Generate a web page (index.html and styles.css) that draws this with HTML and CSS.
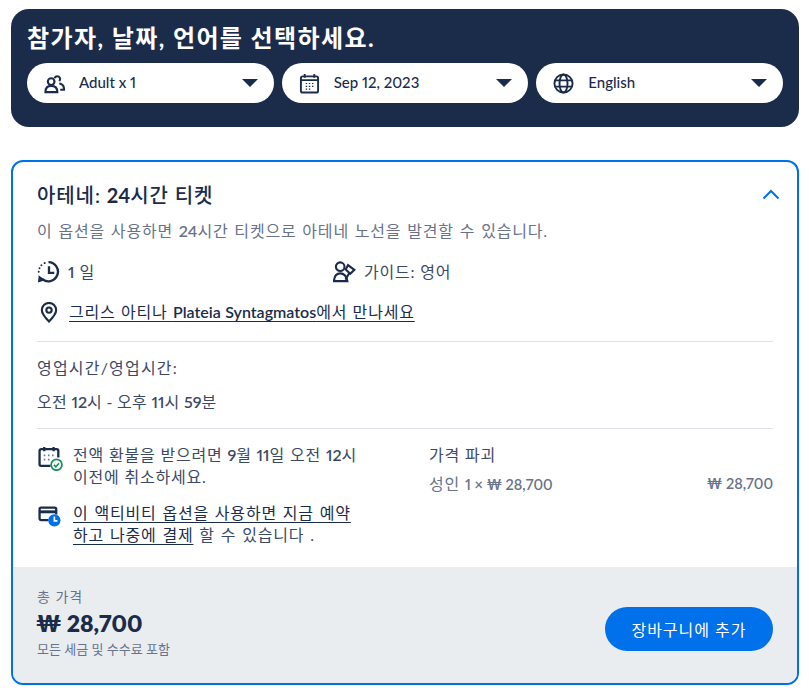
FILE: index.html
```html
<!DOCTYPE html>
<html lang="ko">
<head>
<meta charset="utf-8"/>
<title>옵션 선택</title>
<link rel="stylesheet" href="styles.css">
</head>
<body>

<div class="picker">
  <h2>참가자, 날짜, 언어를 선택하세요.</h2>
  <div class="picker-row">
    <div class="pill">
      <svg class="pill-icon" viewBox="0 0 22 22" fill="none" stroke="#1b2c4b" stroke-width="2.200"><path d="M11 5.500a3 3 0 1 1 5 3"/><path d="M16 11c3 .3 5 2.500 5 6.500h-4"/><circle cx="7.500" cy="9" r="3.500"/><path d="M1.500 20c0-4.500 2.500-6.500 6-6.500s6.500 2 6.500 6.500z"/></svg>
      <span class="pill-text">Adult x 1</span>
      <span class="caret"></span>
    </div>
    <div class="pill">
      <svg class="pill-icon" viewBox="0 0 22 22" fill="none" stroke="#1b2c4b" stroke-width="2"><rect x="2" y="3.500" width="18" height="17" rx="2"/><path d="M6 1v4M16 1v4M2 7.500h18"/><path d="M7 11h1.500M10.300 11h1.500M13.600 11h1.500M7 14h1.500M10.300 14h1.500M13.600 14h1.500M7 17h1.500M10.300 17h1.500" stroke-width="1.300"/></svg>
      <span class="pill-text">Sep 12, 2023</span>
      <span class="caret"></span>
    </div>
    <div class="pill">
      <svg class="pill-icon" viewBox="0 0 22 22" fill="none" stroke="#1b2c4b" stroke-width="2"><circle cx="11" cy="11" r="9.500"/><ellipse cx="11" cy="11" rx="4.200" ry="9.500"/><path d="M2 7.700h18M2 14.300h18"/></svg>
      <span class="pill-text">English</span>
      <span class="caret"></span>
    </div>
  </div>
</div>

<div class="option-card">
  <div class="option-body">
    <div class="option-head">
      <h3>아테네: <span class="lat">24</span>시간 티켓</h3>
      <svg class="chevron" viewBox="0 0 18 11" fill="none" stroke="#0070eb" stroke-width="2"><path d="M1.500 9.500L9 2l7.500 7.500"/></svg>
    </div>
    <p class="option-desc">이 옵션을 사용하면 <span class="lat">24</span>시간 티켓으로 아테네 노선을 발견할 수 있습니다.</p>

    <div class="facts">
      <div class="fact">
        <svg class="fact-icon" viewBox="0 0 24 24" fill="none" stroke="#1b2c4b" stroke-width="2.400"><path d="M12 2.200A10 10 0 1 1 5 19.500"/><path d="M12.500 6.500v7h5.500"/><path d="M1 23.500l.8-7.500 6.700 5z" fill="#1b2c4b" stroke="none"/><path d="M8 3.200v.1M4.600 5.400v.1M2.600 8.600v.1M1.800 12.200v.1" stroke-linecap="round" stroke-width="2"/></svg>
        <span><span class="lat">1</span> 일</span>
      </div>
      <div class="fact">
        <svg class="fact-icon" viewBox="0 0 24 24" fill="none" stroke="#1b2c4b" stroke-width="2.200"><circle cx="7.500" cy="7" r="4.500"/><path d="M1 22c.3-5.500 2.500-8 6.500-8s6.500 2.500 7.500 8z"/><path d="M15.700 5.300l6.600 5-4.300 4-4.700-4.300z" fill="#fff"/><path d="M17 13.500l-4 7"/></svg>
        <span>가이드: 영어</span>
      </div>
    </div>

    <div class="meet">
      <svg class="meet-icon" viewBox="0 0 18 22" fill="none" stroke="#1b2c4b" stroke-width="2.200"><path d="M9 20.500C5 16.500 1.500 12.800 1.500 8.500a7.500 7.500 0 0 1 15 0c0 4.300-3.500 8-7.500 12z"/><circle cx="9" cy="8.500" r="2.800"/></svg>
      <a class="link" href="#">그리스 아티나 <span class="lat">Plateia Syntagmatos</span>에서 만나세요</a>
    </div>

    <div class="hours">
      <p class="hours-label">영업시간/영업시간:</p>
      <p class="hours-time">오전 <span class="lat">12</span>시 - 오후 <span class="lat">11</span>시 <span class="lat">59</span>분</p>
    </div>

    <div class="policy">
      <div class="policy-left">
        <div class="policy-item">
          <svg class="policy-icon" viewBox="0 0 24 24" fill="none" stroke="#1b2c4b" stroke-width="2.200"><path d="M12 19H3a1.500 1.500 0 0 1-1.500-1.500V4.500A1.500 1.500 0 0 1 3 3h15a1.500 1.500 0 0 1 1.500 1.500V11"/><path d="M6 1v4M15 1v4"/><path d="M5.500 9h1.500M9.500 9h1.500M13.500 9h1.500M5.500 13h1.500M9.500 13h1.500" stroke="#68728a" stroke-width="1.600"/><circle cx="17.800" cy="18" r="5.200" fill="#fff" stroke="#17905c" stroke-width="1.700"/><path d="M15.300 18.100l1.800 1.800 3.100-3.400" stroke="#17905c" stroke-width="1.600"/></svg>
          <p>전액 환불을 받으려면 <span class="lat">9</span>월 <span class="lat">11</span>일 오전 <span class="lat">12</span>시<br>이전에 취소하세요.</p>
        </div>
        <div class="policy-item policy-pay">
          <svg class="policy-icon" viewBox="0 0 24 24" fill="none" stroke="#1b2c4b" stroke-width="2.200"><path d="M10 15.500H3A1.500 1.500 0 0 1 1.500 14V5A1.500 1.500 0 0 1 3 3.500h13A1.500 1.500 0 0 1 17.500 5v5"/><path d="M1.500 7.500h16" stroke-width="2.800"/><circle cx="15.700" cy="15.700" r="5.900" fill="#0070eb" stroke="none"/><path d="M15.700 12v4.200h3" stroke="#fff" stroke-width="1.600"/></svg>
          <p><a class="link" href="#">이 액티비티 옵션을 사용하면 지금 예약<br>하고 나중에 결제</a> 할 수 있습니다 .</p>
        </div>
      </div>
      <div class="breakdown">
        <div class="breakdown-title">가격 파괴</div>
        <div class="breakdown-row">
          <span>성인 <span class="lat">1 × ₩ 28,700</span></span>
          <span class="lat">₩ 28,700</span>
        </div>
      </div>
    </div>
  </div>

  <div class="option-foot">
    <div>
      <div class="total-label">총 가격</div>
      <div class="total-price">₩ 28,700</div>
      <div class="total-note">모든 세금 및 수수료 포함</div>
    </div>
    <button class="add-btn">장바구니에 추가</button>
  </div>
</div>

</body>
</html>
```

FILE: styles.css
```css
body {
  font-family: "Lato", "Noto Sans CJK KR", sans-serif;
  font-variant-numeric: proportional-nums;
  margin: 0px;
  padding: 9px 10px 0 11px;
  color: #1b2c4b;
  background: #fff;
}

h2, h3, p {
  margin: 0;
}

a.link {
  color: #1b2c4b;
  text-decoration: underline;
  text-underline-offset: 3px;
}

/* latin runs and digits sit tighter and heavier than the hangul */
.lat {
  letter-spacing: 0;
  font-weight: 600;
}

/* top picker */
.picker {
  background: #1b2c4b;
  border-radius: 18px;
  padding: 14px 16px 24px;
  height: 118px;
  box-sizing: border-box;
}

.picker h2 {
  color: #fff;
  font-size: 24px;
  font-weight: 700;
  line-height: 30px;
  letter-spacing: 1.4px;
  margin-bottom: 10px;
}

.picker-row {
  display: flex;
  gap: 8px;
}

.pill {
  flex: 1;
  height: 40px;
  background: #fff;
  border-radius: 20px;
  display: flex;
  align-items: center;
  padding: 0 16px 0 17px;
  font-size: 15px;
  font-weight: 500;
}

.pill-icon {
  width: 21px;
  height: 21px;
  margin-right: 14px;
}

.pill-text {
  flex: 1;
  padding-bottom: 2px;
}

.caret {
  width: 0;
  height: 0;
  border-left: 8.500px solid transparent;
  border-right: 8.500px solid transparent;
  border-top: 8px solid #1b2c4b;
}

/* option card */
.option-card {
  margin-top: 33px;
  border: 2px solid #0070eb;
  border-radius: 12px;
  overflow: hidden;
}

.option-body {
  padding: 20px 24px 0;
  letter-spacing: 0.8px;
  font-size: 16px;
}

.option-head {
  display: flex;
  justify-content: space-between;
  align-items: center;
  height: 24px;
}

.option-head h3 {
  font-size: 20px;
  font-weight: 500;
  letter-spacing: 0.9px;
}

.option-head h3 .lat {
  font-weight: 700;
}

.chevron {
  width: 18px;
  height: 11px;
  margin-right: -7px;
}

.option-desc {
  margin-top: 14px;
  line-height: 22px;
  word-spacing: 1px;
  color: #68728a;
}

.facts {
  display: grid;
  grid-template-columns: 296px 1fr;
  margin-top: 17px;
}

.fact {
  display: flex;
  align-items: center;
  gap: 8px;
  height: 24px;
  color: #3c4964;
}

.fact-icon {
  width: 23px;
  height: 23px;
}

.meet {
  display: flex;
  align-items: center;
  gap: 11px;
  margin-top: 17px;
  padding-bottom: 17px;
  line-height: 24px;
  word-spacing: 0.5px;
  border-bottom: 1px solid #dfe2e6;
}

.meet-icon {
  width: 18px;
  height: 21px;
  margin-left: 3px;
}

.hours {
  padding: 14px 0;
  color: #3c4964;
  border-bottom: 1px solid #dfe2e6;
}

.hours p {
  line-height: 24px;
}

.hours .hours-label {
  letter-spacing: 1.2px;
}

.hours .hours-time {
  margin-top: 10px;
  letter-spacing: 0.3px;
}

.policy {
  display: flex;
  padding-top: 15px;
  padding-bottom: 21px;
  line-height: 22px;
}

.policy-left {
  width: 392px;
  display: flex;
  flex-direction: column;
  gap: 14px;
}

.policy-item {
  display: flex;
  gap: 10px;
  color: #3c4964;
}

.policy-pay {
  word-spacing: 1px;
}

.policy-icon {
  width: 25px;
  height: 25px;
  flex: none;
  margin: 2px 0 0 1px;
}

.breakdown {
  flex: 1;
}

.breakdown-title {
  color: #3c4964;
}

.breakdown-row {
  display: flex;
  justify-content: space-between;
  margin-top: 7px;
  color: #68728a;
}

.breakdown-row .lat {
  font-size: 14.500px;
}

/* footer with total */
.option-foot {
  background: #e9edf0;
  display: flex;
  justify-content: space-between;
  align-items: flex-start;
  padding: 20px 24px 0;
  height: 116px;
  box-sizing: border-box;
}

.total-label {
  font-size: 14px;
  line-height: 20px;
  letter-spacing: 1px;
  color: #68728a;
}

.total-price {
  font-size: 23px;
  font-weight: 800;
  line-height: 32px;
  margin-left: -1px;
}

.total-note {
  font-size: 13px;
  line-height: 18px;
  margin-top: 1px;
  color: #68728a;
}

.add-btn {
  font-family: inherit;
  font-size: 16px;
  letter-spacing: 1px;
  color: #fff;
  background: #0070eb;
  border: 0;
  border-radius: 22px;
  width: 168px;
  height: 44px;
  margin-top: 20px;
}
```
